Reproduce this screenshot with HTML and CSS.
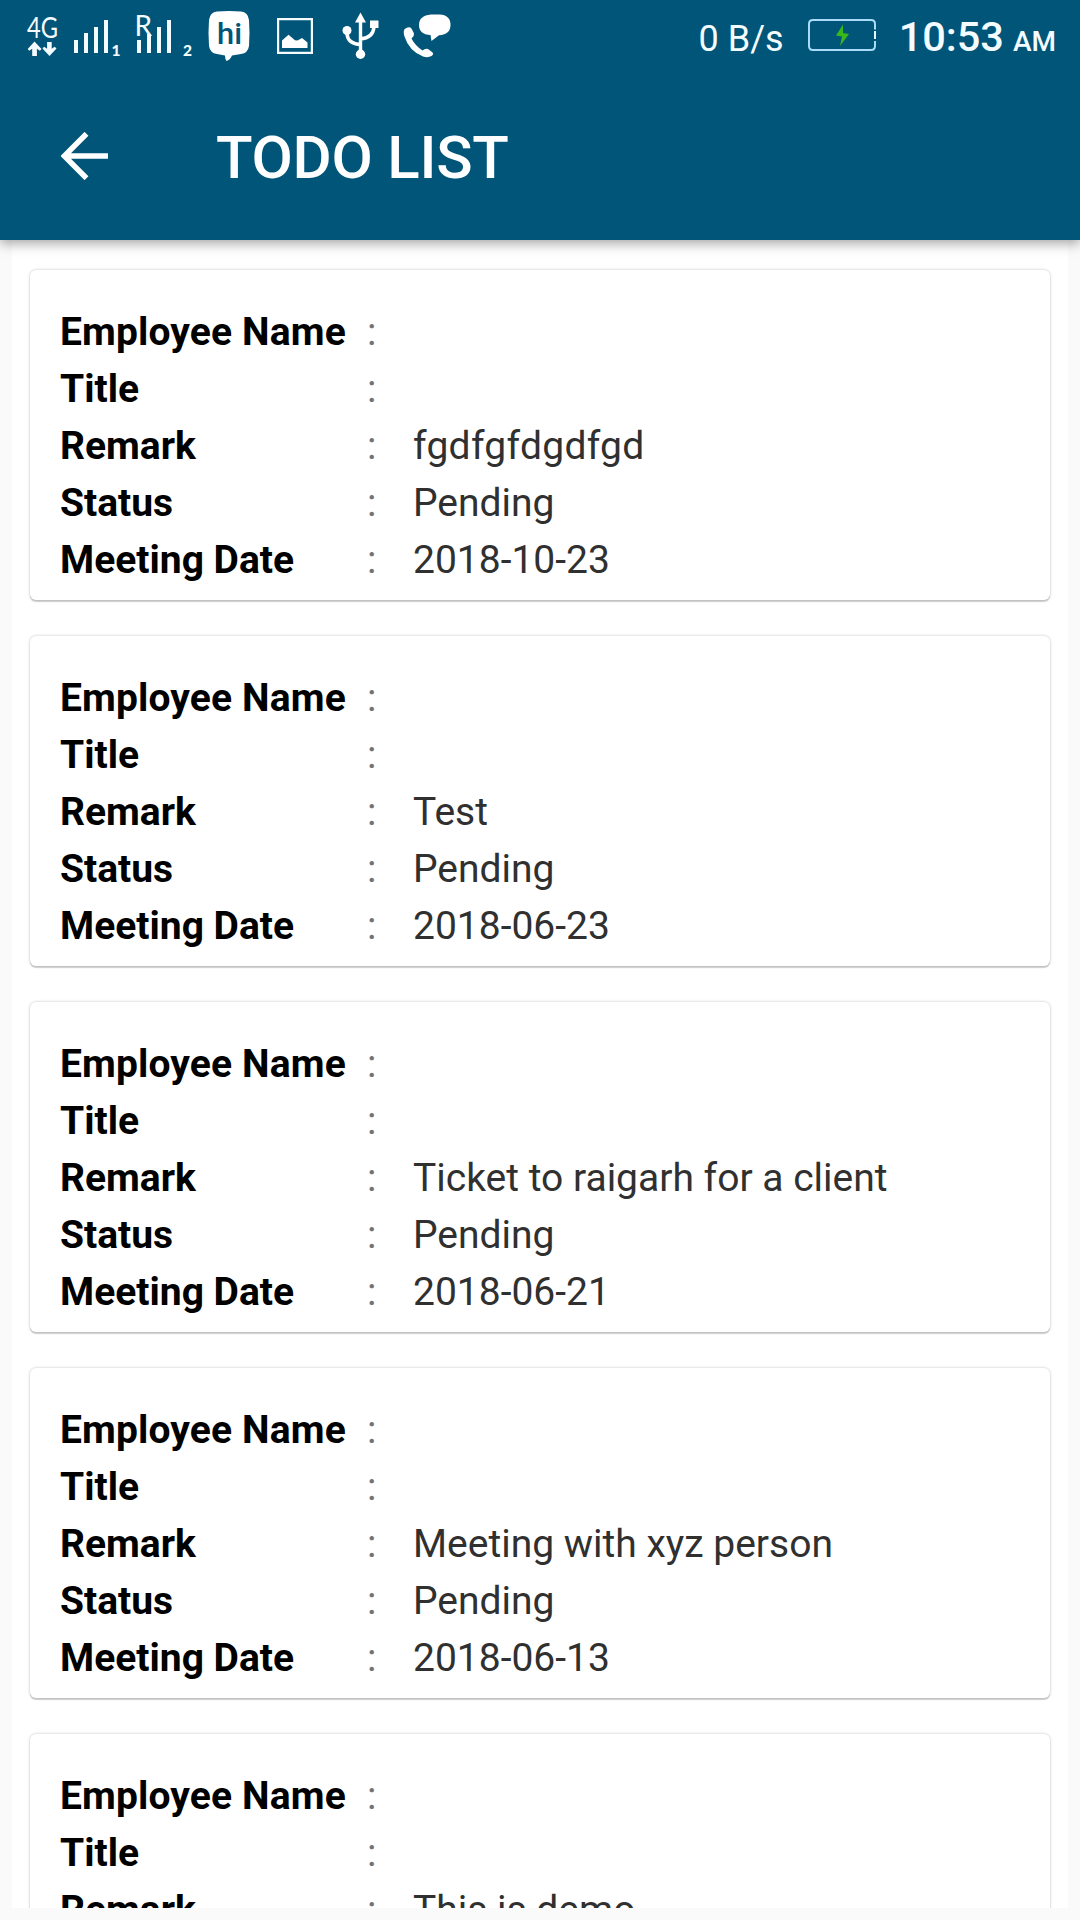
FILE: index.html
```html
<!DOCTYPE html>
<html lang="en">
<head>
<meta charset="utf-8">
<title>Todo List</title>
<link rel="stylesheet" href="styles.css">
</head>
<body>
<div class="screen">
  <header class="header">
    <div class="status">
      <div class="status-icons">
        <svg class="network" width="34" height="72" viewBox="0 0 34 72" fill="#f4fcff">
          <text class="thin" x="0" y="37.5" textLength="31" lengthAdjust="spacingAndGlyphs">4G</text>
          <path d="M7.5 41.5 14.5 49l-1.6 1.8-3-2V56H5.200V48.800l-3 2L.7 49zM22.500 56l-7-7.500 1.600-1.800 3 2V42h4.600v6.700l3-2L29.500 48.500z"/>
        </svg>
        <svg class="signal" width="48" height="72" viewBox="0 0 48 72" fill="#f4fcff">
          <path d="M0 40h4v13H0zM10 33h4v20h-4zM20 27h4v26h-4zM30 20h4v33h-4z"/>
          <text class="sim" x="37.500" y="56">1</text>
        </svg>
        <svg class="roaming" width="60" height="72" viewBox="0 0 60 72" fill="#f4fcff">
          <text class="thin" x="-.5" y="36">R</text>
          <path d="M2 40h4v13H2zM12 34h4v19h-4zM22 27h4v26h-4zM32 20h4v33h-4z"/>
          <text class="sim" x="48" y="56">2</text>
        </svg>
        <svg class="chat" width="42" height="72" viewBox="0 0 42 72">
          <path fill="#fff" d="M9 11.500Q21 10.500 33 11.500Q40 12 41 20Q42 33 41 46Q40 53 33 54L24 55.500Q22 60 18.500 61Q17 59 17 55.500L9 54Q2 53 1 46Q0 33 1 20Q2 12 9 11.500z"/>
          <text class="hi" x="9" y="44" textLength="25" lengthAdjust="spacingAndGlyphs">hi</text>
        </svg>
        <svg class="photo" width="36" height="72" viewBox="0 0 36 72">
          <path fill="none" stroke="#f4fcff" stroke-width="2.200" d="M1.100 19.100h33.800v33.800H1.100z"/>
          <path fill="#fff" d="M5 48v-7.500l6.500-5.800 6.500 5.500 2.500.3 4.500-2.500 5.500 4.500V48z"/>
        </svg>
        <svg class="usb" width="38" height="72" viewBox="0 0 38 72">
          <path fill="none" stroke="#fff" stroke-width="3.400" d="M18.500 18v36M5 32v2q1 10 13.500 10.500M18.500 39Q31 38 32 27"/>
          <path fill="#fff" d="M18.500 12.500 24 22.500H13zM28 20.500h8.500V28H28z"/>
          <circle cx="5" cy="30.500" r="4.500" fill="#fff"/><circle cx="18.500" cy="54.300" r="4.700" fill="#fff"/>
        </svg>
        <svg class="call" width="50" height="72" viewBox="0 0 50 72" fill="#fff">
          <path d="M28 14.500h8.500Q47.500 15 47.500 25 47.500 34.500 36 35.300L28.500 41 27.500 35Q16 34.500 16 25 16 15.500 28 14.500z"/>
          <path d="M2.500 28.500Q7.500 25.500 9 29.500L11 33.500Q11.500 36 8.500 38.500 12 45.500 19.500 50.500 22.500 48 25 49L29 52Q31.500 54 28.500 56 25 58 20 56.500 6 51 1.500 36.500-.5 30 2.500 28.500z"/>
        </svg>
      </div>
      <div class="status-info">
        <span class="speed">0 B/s</span>
        <svg class="battery" width="68" height="72" viewBox="0 0 68 72">
          <path fill="none" stroke="#a9dcf8" stroke-width="2" d="M67 30.500V25q0-4-4-4H5q-4 0-4 4v22q0 4 4 4h58q4 0 4-4v-5"/>
          <path stroke="#e8f8ff" stroke-width="2" d="M67 32v8"/>
          <path fill="#38b81a" d="M35 25.500 28 36.500l6 1-2 9.500 9-12-6-1z"/>
        </svg>
        <span class="clock">10:53</span><span class="ampm">AM</span>
      </div>
    </div>
    <div class="toolbar">
      <svg width="48" height="48" viewBox="0 0 48 48" fill="none" stroke="#fff" stroke-width="5.500">
        <path d="M47 24H5M25.500 1.800 3.300 24l22.200 22.200"/>
      </svg>
      <h1 class="title">TODO LIST</h1>
    </div>
  </header>
  <main class="list">
    <dl class="card">
      <div class="row"><dt class="name">Employee Name</dt><i>:</i><dd></dd></div>
      <div class="row"><dt>Title</dt><i>:</i><dd></dd></div>
      <div class="row"><dt>Remark</dt><i>:</i><dd class="wide">fgdfgfdgdfgd</dd></div>
      <div class="row"><dt>Status</dt><i>:</i><dd>Pending</dd></div>
      <div class="row"><dt>Meeting Date</dt><i>:</i><dd>2018-10-23</dd></div>
    </dl>
    <dl class="card">
      <div class="row"><dt class="name">Employee Name</dt><i>:</i><dd></dd></div>
      <div class="row"><dt>Title</dt><i>:</i><dd></dd></div>
      <div class="row"><dt>Remark</dt><i>:</i><dd>Test</dd></div>
      <div class="row"><dt>Status</dt><i>:</i><dd>Pending</dd></div>
      <div class="row"><dt>Meeting Date</dt><i>:</i><dd>2018-06-23</dd></div>
    </dl>
    <dl class="card">
      <div class="row"><dt class="name">Employee Name</dt><i>:</i><dd></dd></div>
      <div class="row"><dt>Title</dt><i>:</i><dd></dd></div>
      <div class="row"><dt>Remark</dt><i>:</i><dd>Ticket to raigarh for a client</dd></div>
      <div class="row"><dt>Status</dt><i>:</i><dd>Pending</dd></div>
      <div class="row"><dt>Meeting Date</dt><i>:</i><dd>2018-06-21</dd></div>
    </dl>
    <dl class="card">
      <div class="row"><dt class="name">Employee Name</dt><i>:</i><dd></dd></div>
      <div class="row"><dt>Title</dt><i>:</i><dd></dd></div>
      <div class="row"><dt>Remark</dt><i>:</i><dd>Meeting with xyz person</dd></div>
      <div class="row"><dt>Status</dt><i>:</i><dd>Pending</dd></div>
      <div class="row"><dt>Meeting Date</dt><i>:</i><dd>2018-06-13</dd></div>
    </dl>
    <dl class="card">
      <div class="row"><dt class="name">Employee Name</dt><i>:</i><dd></dd></div>
      <div class="row"><dt>Title</dt><i>:</i><dd></dd></div>
      <div class="row"><dt>Remark</dt><i>:</i><dd>This is demo</dd></div>
    </dl>
  </main>
</div>
</body>
</html>
```
FILE: styles.css
```css
* { box-sizing: border-box; }
body { margin: 0; background: #fafafa; font-family: Roboto, "Liberation Sans", sans-serif; }
.screen { width: 1080px; height: 1920px; overflow: hidden; display: flex; flex-direction: column; padding-bottom: 12px; }
.header { flex: none; height: 240px; background: #005578; color: #fff; box-shadow: 0 3px 12px rgba(0, 0, 0, .38); position: relative; z-index: 1; }
.status { height: 72px; display: flex; justify-content: space-between; padding: 0 24px 0 27px; }
.status svg { display: block; flex: none; overflow: visible; }
.status-icons { display: flex; }
.network { margin-right: 13px; }
.signal { margin-right: 13px; }
.roaming { margin-right: 13px; }
.chat { margin-right: 27px; }
.photo { margin-right: 29px; }
.usb { margin-right: 23px; }
.thin { font: 400 28px Lato, sans-serif; }
.sim { font: 900 15.5px Lato, sans-serif; }
.hi { font: 500 30px Roboto, sans-serif; fill: #005578; }
.status-info { display: flex; align-items: baseline; color: #f4fcff; line-height: 74px; }
.status-info svg { align-self: flex-start; }
.speed { font-size: 36px; margin-right: 25px; }
.status-info .battery { margin: -1px 23px 0 -1px; }
.clock { font-size: 41.5px; font-weight: 500; margin-right: 9px; }
.ampm { font-size: 28px; font-weight: 500; }
.toolbar { height: 168px; display: flex; align-items: center; padding: 0 60px 0 61px; gap: 107px; }
.title { margin: 0; font-size: 60px; font-weight: 500; line-height: 72px; padding-top: 3px; letter-spacing: -.25px; }
.list { flex: 1; min-height: 0; overflow: hidden; margin: 0 12px; padding: 30px 18px 0; background: #fff; display: flex; flex-direction: column; gap: 36px; }
.card { flex: none; height: 330px; margin: 0; padding: 34px 30px 11px; background: #fff; border-radius: 6px; box-shadow: 0 2px 1px rgba(0, 0, 0, .17), 0 0 3px rgba(0, 0, 0, .24); }
.row { display: grid; grid-template-columns: 307px 46px 1fr; height: 57px; font-size: 39px; line-height: 57px; white-space: nowrap; }
.row dt { font-weight: 700; color: #000; }
.row .name { letter-spacing: .13px; }
.row i { font-style: normal; color: #737373; }
.row dd { margin: 0; color: #303030; }
.row .wide { letter-spacing: .3px; }
```
